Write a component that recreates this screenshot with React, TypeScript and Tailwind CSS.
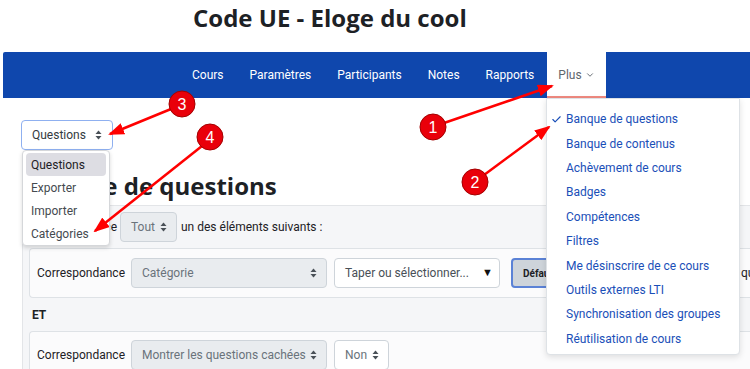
import { Check, ChevronDown } from 'lucide-react';

const navItems = ['Cours', 'Paramètres', 'Participants', 'Notes', 'Rapports'];

const plusMenu = [
  'Banque de questions',
  'Banque de contenus',
  'Achèvement de cours',
  'Badges',
  'Compétences',
  'Filtres',
  'Me désinscrire de ce cours',
  'Outils externes LTI',
  'Synchronisation des groupes',
  'Réutilisation de cours',
];

const questionMenu = ['Questions', 'Exporter', 'Importer', 'Catégories'];

function UpDown() {
  return (
    <svg width="7" height="10" viewBox="0 0 7 10" className="shrink-0">
      <path d="M3.5 0.5 L6.5 4 L0.5 4 Z" fill="#495057" />
      <path d="M3.5 9.5 L6.5 6 L0.5 6 Z" fill="#495057" />
    </svg>
  );
}

function Select({ label, width, className = '' }: { label: string; width: string; className?: string }) {
  return (
    <div
      className={`flex h-[30px] shrink-0 items-center justify-between rounded border border-[#ced4da] bg-[#e9ecef] pl-[10px] pr-[9px] text-[12px] text-[#6a737b] ${width} ${className}`}
    >
      <span className="whitespace-nowrap">{label}</span>
      <UpDown />
    </div>
  );
}

// numbered red markers + arrows drawn on top of the screenshot
const arrows = [
  { x1: 444, y1: 123, x2: 552, y2: 86 },
  { x1: 484, y1: 175, x2: 549, y2: 127 },
  { x1: 171, y1: 109, x2: 110, y2: 134 },
  { x1: 202, y1: 146, x2: 95, y2: 231 },
];

const markers = [
  { n: '1', cx: 433, cy: 127 },
  { n: '2', cx: 475, cy: 182 },
  { n: '3', cx: 182, cy: 104 },
  { n: '4', cx: 210, cy: 137 },
];

function Annotations() {
  return (
    <svg width="750" height="369" className="pointer-events-none absolute left-0 top-0">
      <defs>
        <marker id="head" markerWidth="16" markerHeight="12" refX="14" refY="6" orient="auto" markerUnits="userSpaceOnUse">
          <path d="M0 0 L16 6 L0 12 Z" fill="#f00" />
        </marker>
      </defs>
      {arrows.map((a, i) => (
        <line key={i} x1={a.x1} y1={a.y1} x2={a.x2} y2={a.y2} stroke="#f00" strokeWidth="2.5" markerEnd="url(#head)" />
      ))}
      {markers.map((m) => (
        <g key={m.n}>
          <circle cx={m.cx} cy={m.cy} r="13" fill="#e9000a" stroke="#a30000" strokeWidth="1" />
          <text
            x={m.cx}
            y={m.cy + 5.5}
            textAnchor="middle"
            fill="#fff"
            fontSize="16"
            fontFamily="'Liberation Sans', Arial, sans-serif"
          >
            {m.n}
          </text>
        </g>
      ))}
    </svg>
  );
}

export default function App() {
  return (
    <div className="relative h-[369px] w-[750px] overflow-hidden bg-white font-['Roboto',sans-serif] text-[#1d2125]">
      {/* Course title */}
      <div className="h-[52px] pl-[193px] pt-[3px]">
        <h1 className="font-['Open_Sans',sans-serif] text-[24px] font-bold leading-[30px] text-[#1d2125]">
          Code UE - Eloge du cool
        </h1>
      </div>

      {/* Secondary navigation */}
      <div className="ml-[3px] flex h-[46px] items-stretch rounded-tl-[2px] bg-[#0f47ad] pl-[176px]">
        {navItems.map((item) => (
          <div key={item} className="flex items-center px-[13px] text-[12px] text-white">
            {item}
          </div>
        ))}
        <div className="flex items-center gap-[3px] border-b-2 border-[#f08a80] bg-white pl-[11px] pr-[11px] pt-[2px] text-[12px] text-[#5f666d]">
          Plus
          <ChevronDown size={10} strokeWidth={2.2} />
        </div>
      </div>

      {/* Page content */}
      <div className="pl-[21px] pt-[22px]">
        <div className="flex h-[30px] w-[92px] items-center justify-between rounded border border-[#8fb0f0] bg-white pl-[10px] pr-[10px] text-[12px] text-[#343a40]">
          Questions
          <UpDown />
        </div>

        <h2 className="mt-[21px] h-[34px] whitespace-nowrap pl-[5px] font-['Open_Sans',sans-serif] text-[24px] font-bold leading-[30px] text-[#1d2125]">
          Banque de questions
        </h2>

        {/* Filter box */}
        <div className="ml-[1px] rounded-tl border-l border-t border-[#e3e5e8] bg-[#f5f6f8] pl-[6px]">
          <div className="flex h-[42px] items-center text-[12px]">
            <span className="mr-[4px] w-[87px] shrink-0 whitespace-nowrap">Correspondance</span>
            <Select label="Tout" width="w-[57px]" />
            <span className="ml-[4px] whitespace-nowrap">un des éléments suivants :</span>
          </div>

          <div className="flex h-[50px] items-center rounded-l border-y border-l border-[#dee2e6] bg-[#fbfbfc] pl-[7px] text-[12px]">
            <span className="mr-[6px] w-[88px] shrink-0 whitespace-nowrap">Correspondance</span>
            <Select label="Catégorie" width="w-[196px]" />
            <div className="ml-[7px] flex h-[30px] w-[166px] shrink-0 items-center justify-between whitespace-nowrap rounded border border-[#ced4da] bg-white pl-[10px] pr-[6px] text-[#495057]">
              Taper ou sélectionner...
              <span className="text-[11px] text-[#111]">▼</span>
            </div>
            <div className="ml-[11px] flex h-[30px] w-[56px] shrink-0 items-center rounded border-2 border-[#5b82d6] bg-[#ced4da] pl-[10px] text-[10px] font-bold text-[#1d2125]">
              Défaut
            </div>
            <span className="ml-[174px] shrink-0 whitespace-nowrap">questions</span>
          </div>

          <div className="flex h-[33px] items-center pl-[3px] text-[12px] font-bold">ET</div>

          <div className="flex h-[50px] items-start rounded-l border-y border-l border-[#dee2e6] bg-[#fbfbfc] pl-[7px] pt-[8px] text-[12px]">
            <span className="mr-[6px] w-[88px] shrink-0 whitespace-nowrap leading-[30px]">Correspondance</span>
            <Select label="Montrer les questions cachées" width="w-[196px]" />
            <Select label="Non" width="w-[55px]" className="ml-[7px] bg-white" />
          </div>
        </div>
      </div>

      {/* Questions action dropdown */}
      <div className="absolute left-[22px] top-[150px] h-[96px] w-[88px] rounded border border-[#d5d7da] bg-white px-[3px] pt-[2px] text-[12px] text-[#454a50] shadow-[0_2px_4px_rgba(0,0,0,0.15)]">
        {questionMenu.map((item, i) => (
          <div
            key={item}
            className={`flex h-[23px] items-center pl-[5px] ${i === 0 ? 'rounded-sm bg-[#dddde3] text-[#1d2125]' : ''}`}
          >
            {item}
          </div>
        ))}
      </div>

      {/* Plus dropdown menu */}
      <div className="absolute left-[546px] top-[98px] h-[257px] w-[194px] rounded-b border border-[#dee2e6] bg-white py-[8px] text-[12px] text-[#1a4fb8] shadow-[0_2px_6px_rgba(0,0,0,0.12)]">
        {plusMenu.map((item, i) => (
          <div key={item} className="relative flex h-[24.4px] items-center whitespace-nowrap pl-[19px]">
            {i === 0 && <Check size={11} strokeWidth={2.5} className="absolute left-[4px] top-[7px]" />}
            {item}
          </div>
        ))}
      </div>

      <Annotations />
    </div>
  );
}
